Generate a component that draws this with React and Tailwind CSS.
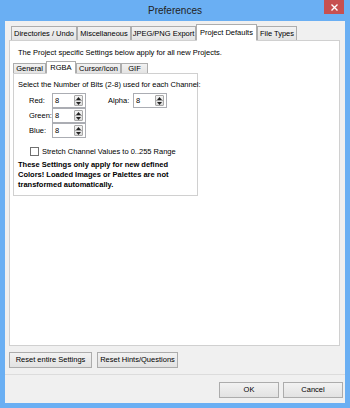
import React from "react";

const font = { fontFamily: '"Liberation Sans", Arial, sans-serif' };

function Tab({ label, w, active, small }) {
  const h = small
    ? active
      ? "h-[13px]"
      : "h-[11px]"
    : active
    ? "h-[17px]"
    : "h-[15px]";
  return (
    <div
      className={`flex items-center justify-center whitespace-nowrap -mb-px border border-[#adadad] ${w} ${h} ${
        active
          ? "bg-white border-b-white relative z-10"
          : "bg-gradient-to-b from-[#f2f2f2] to-[#e3e3e3]"
      }`}
    >
      {label}
    </div>
  );
}

function Arrow({ up }) {
  return (
    <svg width="5" height="3" viewBox="0 0 5 3">
      <path d={up ? "M0 3 L2.5 0 L5 3 Z" : "M0 0 L2.5 3 L5 0 Z"} fill="#222" />
    </svg>
  );
}

function Spin({ value }) {
  return (
    <div className="flex h-[15px] w-[34px] border border-[#abadb3] bg-white">
      <span className="flex-1 pl-[2px] leading-[13px]">{value}</span>
      <div className="my-[1px] mr-[2px] flex w-[9px] flex-col rounded-[1px] border border-[#a8a8a8] bg-gradient-to-b from-[#f3f3f3] to-[#dcdcdc]">
        <div className="flex flex-1 items-center justify-center border-b border-[#a8a8a8]">
          <Arrow up />
        </div>
        <div className="flex flex-1 items-center justify-center">
          <Arrow />
        </div>
      </div>
    </div>
  );
}

function Button({ label, w }) {
  return (
    <div
      className={`flex h-[16px] items-center justify-center whitespace-nowrap border border-[#acacac] bg-gradient-to-b from-[#f2f2f2] to-[#e2e2e2] ${w}`}
    >
      {label}
    </div>
  );
}

export default function App() {
  return (
    <div
      className="flex h-[408px] w-[350px] flex-col bg-[#6aaff3] text-[7.5px] text-black"
      style={font}
    >
      <div className="relative flex h-[21px] shrink-0 items-center justify-center text-[10px] text-[#222]">
        Preferences
        <div className="absolute right-[6px] top-0 flex h-[14px] w-[20px] items-center justify-center bg-[#c75050]">
          <svg width="7" height="7" viewBox="0 0 7 7">
            <path d="M0.5 0.5 L6.5 6.5 M6.5 0.5 L0.5 6.5" stroke="white" strokeWidth="1.4" />
          </svg>
        </div>
      </div>

      <div className="mx-[5px] mb-[5px] flex flex-1 flex-col bg-[#f0f0f0] pl-[4px] pr-[5px] pt-[3px]">
        <div className="flex items-end pl-[2px]">
          <Tab label="Directories / Undo" w="w-[66px]" />
          <Tab label="Miscellaneous" w="w-[54px]" />
          <Tab label="JPEG/PNG Export" w="w-[65px]" />
          <Tab label="Project Defaults" w="w-[61px]" active />
          <Tab label="File Types" w="w-[40px]" />
        </div>

        <div className="flex h-[306px] flex-col border border-[#d0d0d0] bg-white px-[3px] pt-[7px]">
          <div className="whitespace-nowrap pl-[5px] leading-[10px]">
            The Project specific Settings below apply for all new Projects.
          </div>

          <div className="mt-[3px] flex items-end">
            <Tab label="General" w="w-[33px]" small />
            <Tab label="RGBA" w="w-[30px]" active small />
            <Tab label="Cursor/Icon" w="w-[45px]" small />
            <Tab label="GIF" w="w-[27px]" small />
          </div>

          <div className="flex h-[123px] w-[185px] flex-col border border-[#d0d0d0] bg-white px-[4px] pt-[6px]">
            <div className="whitespace-nowrap leading-[10px]">
              Select the Number of Bits (2-8) used for each Channel:
            </div>

            <div className="mt-[3px] flex">
              <div className="flex flex-col">
                {[
                  ["Red:", "8"],
                  ["Green:", "8"],
                  ["Blue:", "8"],
                ].map(([l, v]) => (
                  <div key={l} className="flex h-[15px] items-center">
                    <span className="w-[34px] whitespace-nowrap pl-[11px]">{l}</span>
                    <Spin value={v} />
                  </div>
                ))}
              </div>
              <div className="ml-[22px] flex h-[15px] items-center">
                <span className="w-[25px] whitespace-nowrap">Alpha:</span>
                <Spin value="8" />
              </div>
            </div>

            <div className="mt-[8px] flex items-center pl-[12px]">
              <div className="h-[9px] w-[9px] border border-[#707070] bg-white" />
              <span className="ml-[3px] whitespace-nowrap">Stretch Channel Values to 0..255 Range</span>
            </div>

            <div className="mt-[3px] whitespace-nowrap font-bold leading-[10px]">
              These Settings only apply for new defined
              <br />
              Colors! Loaded Images or Palettes are not
              <br />
              transformed automatically.
            </div>
          </div>
        </div>

        <div className="mt-[6px] flex gap-[5px]">
          <Button label="Reset entire Settings" w="w-[83px]" />
          <Button label="Reset Hints/Questions" w="w-[81px]" />
        </div>

        <div className="-ml-[4px] -mr-[5px] mt-[6px] flex flex-1 justify-end gap-[4px] border-t border-[#dcdcdc] pr-[2px] pt-[7px]">
          <Button label="OK" w="w-[60px]" />
          <Button label="Cancel" w="w-[60px]" />
        </div>
      </div>
    </div>
  );
}
